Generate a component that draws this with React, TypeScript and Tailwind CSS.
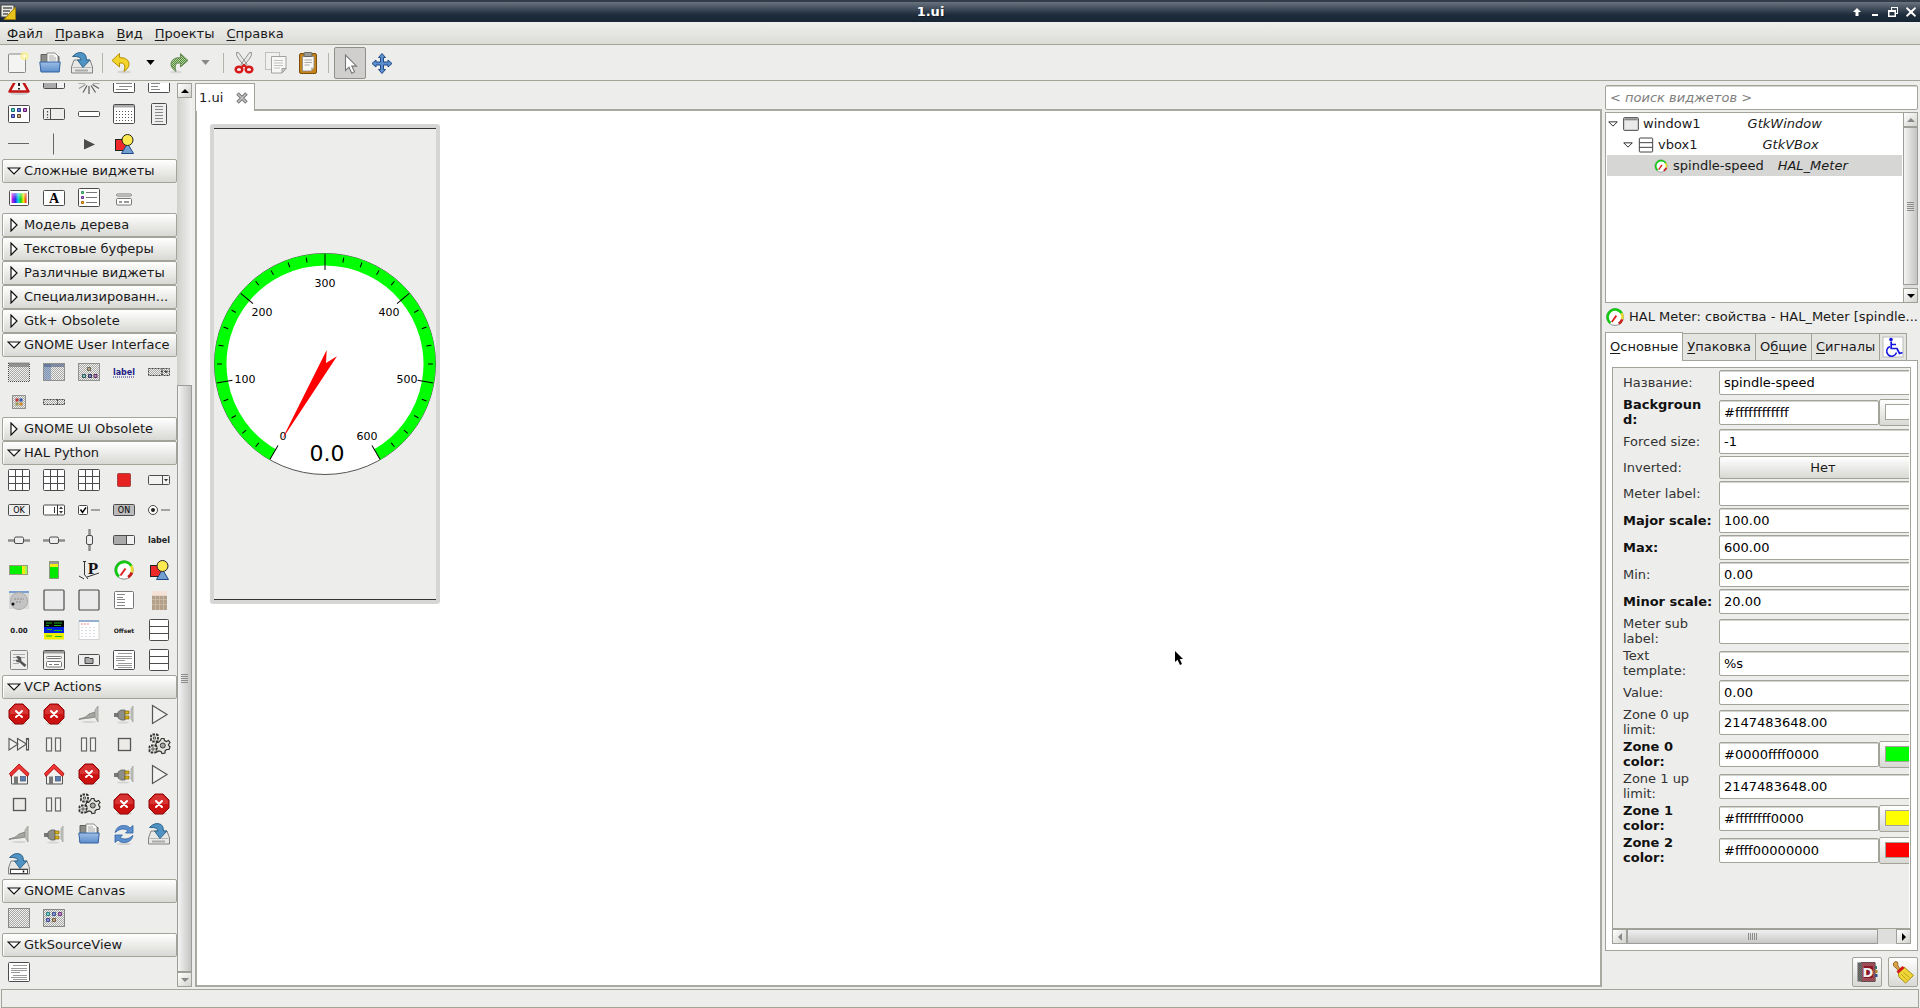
import { useState, type ReactNode } from "react";

const K = "#4c4c4c";

/* ---------- icon drawings, all on a 24 x 24 grid ---------- */

const grid3 = (
  <g fill="#fff" stroke={K} strokeWidth="1">
    <rect x="1.5" y="1.5" width="21" height="21" rx="1" />
    <path d="M8.5 1.5v21M15.5 1.5v21M1.5 8.5h21M1.5 15.5h21" />
  </g>
);

const vboxIcon = (
  <g fill="#fff" stroke={K} strokeWidth="1">
    <rect x="2.5" y="1.5" width="19" height="21" rx="1" />
    <path d="M2.5 8.5h19M2.5 15.5h19" />
  </g>
);

const shapes = (
  <g stroke="#222" strokeWidth="1">
    <rect x="3.5" y="7.500" width="11" height="11" fill="#ef2929" />
    <path d="M15.500 11.500L21.500 21.500H9.500z" fill="#729fcf" stroke="#204a87" />
    <circle cx="15.500" cy="8" r="5.500" fill="#fce94f" />
  </g>
);

const meter = (
  <g fill="none">
    <circle cx="12" cy="12" r="9.200" fill="#fff" stroke="#8a8a8a" strokeWidth="1" />
    <path d="M7 18.500A8.200 8.200 0 1 1 19.500 8.500" stroke="#12c912" strokeWidth="2.600" />
    <path d="M19 7.700A8.200 8.200 0 0 1 19.800 14.500" stroke="#e9dc2c" strokeWidth="2.600" />
    <path d="M19.800 14.500A8.200 8.200 0 0 1 16 19.200" stroke="#c81e1e" strokeWidth="2.800" />
    <path d="M8.500 17.500l5-7" stroke="#e02020" strokeWidth="2" />
  </g>
);

const stop = (
  <g>
    <ellipse cx="12" cy="21.500" rx="8" ry="1.500" fill="#cfcfcd" />
    <path d="M8 2h8l6 6v8l-6 6H8l-6-6V8z" fill="#cc1111" stroke="#8f0a0a" />
    <path d="M8.400 3h7.200L21 8.400V12H3V8.400z" fill="#e05050" opacity=".55" />
    <path d="M9 9l6 6M15 9l-6 6" stroke="#fff" strokeWidth="2" strokeLinecap="round" />
  </g>
);

const cord = (
  <g>
    <ellipse cx="12" cy="20" rx="7" ry="1" fill="#d4d4d2" />
    <path d="M2 17q7-1 10-5l6-2v5l-5 1q-4 0-11 1.500z" fill="#a4a4a0" stroke="#7a7a76" strokeWidth=".8" />
    <path d="M18 8l3-4v16l-3-5z" fill="#bdbdb9" stroke="#9a9a96" strokeWidth=".8" />
  </g>
);

const plug = (
  <g>
    <ellipse cx="11" cy="20.500" rx="6" ry="1" fill="#d4d4d2" />
    <path d="M2 11h5v4H2z" fill="#777" />
    <path d="M6 10l3-2h4v10H9l-3-2z" fill="#8d8d89" stroke="#62625e" strokeWidth=".8" />
    <path d="M13 9h4v3h-4zM13 14h4v3h-4z" fill="#d9b21a" stroke="#7c6408" strokeWidth=".7" />
    <path d="M21 4v16l-2-3V7z" fill="#c6c6c2" stroke="#a2a29e" strokeWidth=".8" />
  </g>
);

const playOutline = <path d="M5.500 3.500L20 12.500L5.500 21.500z" fill="#f2f2f0" stroke="#555" strokeWidth="1.200" />;

const stepIcon = (
  <g fill="#f2f2f0" stroke="#555" strokeWidth="1.100">
    <path d="M2 6.500l9 5.500-9 6zM10.500 6.500l9 5.500-9 6z" />
    <rect x="19.500" y="6.500" width="2" height="11.500" />
  </g>
);

const pauseIcon = (
  <g fill="#f4f4f2" stroke="#666" strokeWidth="1.200">
    <rect x="4.500" y="6" width="5" height="13" />
    <rect x="13.500" y="6" width="5" height="13" />
  </g>
);

const stopSquare = <rect x="6.500" y="6.500" width="12" height="12" fill="#ecebe8" stroke="#555" strokeWidth="1.300" />;

const gears = (
  <g fill="#e4e4df" stroke="#333">
    <path
      d="M14.500 6.500h2.500l.5 2 2 1 2-1 1.500 2-1.500 2 .5 1.500 1 1-1 2.500-2.500 0-1.500 1.500 0 2-3 .5-1-2-2-.5-2 1-1.500-2.500 1.500-1.500-.5-2-1-1 1-2.500 2 0 1.500-1.500z"
      strokeWidth="1.200"
    />
    <circle cx="15.800" cy="13.500" r="2.500" fill="#aaa" strokeWidth="1" />
    <g strokeDasharray="2.500 1">
      <rect x="4" y="2.500" width="7" height="7" rx="1.500" strokeWidth="1.800" />
      <rect x="2.500" y="13.500" width="7" height="7" rx="1.500" strokeWidth="1.800" />
    </g>
    <path d="M6.500 5h2v2h-2zM5 16h2v2H5z" fill="#fff" strokeWidth=".8" />
  </g>
);

const home = (
  <g>
    <path d="M4.500 11v11h16V11l-8-7z" fill="#f0f0ee" stroke="#555" />
    <path d="M12 2L2.500 11.500l1.500 3L12 6.500l8.500 8 1.500-3z" fill="#ef3434" stroke="#a40000" strokeWidth=".8" />
    <rect x="7" y="14.500" width="4" height="7.500" fill="#777" />
    <rect x="13.500" y="14.500" width="5" height="4.500" fill="#5b7fb4" stroke="#44546e" strokeWidth=".7" />
  </g>
);

const folder = (
  <g>
    <path d="M3 3.500h7l2 2h9V20H3z" fill="#8c8c88" stroke="#555" strokeWidth=".9" />
    <path d="M9 2h8l3 3v8H9z" fill="#f5f5f3" stroke="#777" strokeWidth=".8" />
    <path d="M11 5h5M11 7h7M11 9h7" stroke="#999" strokeWidth=".8" />
    <path d="M1.800 11h20.400l-1 10H3z" fill="url(#blueFace)" stroke="#3465a4" />
  </g>
);

const refresh = (
  <g fill="#5b8fce" stroke="#2f5f9f" strokeWidth=".8">
    <ellipse cx="12" cy="22" rx="7" ry="1" fill="#d0d0ce" stroke="none" />
    <path d="M3 10.500Q5 3 12.500 3.500Q16 3.500 18 6L21 3.500V11H13.500L16 8.500Q10 4.500 3 10.500z" />
    <path d="M21 13.500Q19 21 11.500 20.500Q8 20.500 6 18L3 20.500V13H10.500L8 15.500Q14 19.500 21 13.500z" />
  </g>
);

const save = (
  <g>
    <path d="M4 9h16l2.500 7v6h-21v-6z" fill="#e8e8e6" stroke="#777" strokeWidth=".9" />
    <path d="M2.500 16.500h19" stroke="#aaa" strokeWidth=".8" />
    <path d="M5 18.500h13v2H5z" fill="#aaa" />
    <path d="M2.500 5.500Q8-.5 14 2.500Q16.500 4 16.500 9H20L13 16.500L7.500 9H11Q11 5 2.500 5.500z" fill="#4f93c4" stroke="#285d85" strokeWidth=".9" />
  </g>
);

const saveAs = (
  <g>
    {save}
    <rect x="3.500" y="17.500" width="17" height="4" fill="#fff" stroke="#333" strokeWidth=".9" />
    <path d="M16.500 18.500v2" stroke="#000" strokeWidth="1.500" />
  </g>
);

const docLines = (
  <g>
    <rect x="1.500" y="2.500" width="21" height="19" rx="1" fill="#fff" stroke={K} />
    <path d="M6 5.500h14M4 8.500h16M4 10.500h16M4 12.500h9M6 15.500h14M4 17.500h16M6 19.500h14" stroke="#999" />
  </g>
);

const hScale = (
  <g>
    <path d="M1 12.500h22" stroke="#8c8c8c" strokeWidth="2.500" />
    <rect x="7.500" y="9" width="9" height="6.500" rx="1.500" fill="#eee" stroke={K} />
  </g>
);

const dots = (
  <g strokeWidth="1">
    <path d="M4.500 6.500h3v3h-3z" fill="#5fd0cd" stroke="#14706d" />
    <path d="M10.500 6.500h3v3h-3z" fill="#6b87d8" stroke="#223a86" />
    <path d="M16.500 6.500h3v3h-3z" fill="#c96bd8" stroke="#5c1d68" />
    <path d="M4.500 12.500h3v3h-3z" fill="#7f86dc" stroke="#252c82" />
    <path d="M10.500 12.500h3v3h-3z" fill="#c4a383" stroke="#5f4020" />
  </g>
);

const word = (t: string, size: number, fill = "#222") => (
  <text x="12" y="15" textAnchor="middle" fontSize={size} fontWeight="bold" fill={fill}>
    {t}
  </text>
);

const icons: Record<string, ReactNode> = {
  warning: (
    <g>
      <ellipse cx="12" cy="21.500" rx="9" ry="1.500" fill="#ccc" />
      <path d="M12 2.500L21.500 19.500h-19z" fill="#f6f6f4" stroke="#c41414" strokeWidth="2.500" strokeLinejoin="round" />
      <path d="M12 8v6M12 16v1.500" stroke="#222" strokeWidth="2" />
    </g>
  ),
  progress: (
    <g>
      <rect x="1.500" y="7.500" width="21" height="9" rx="1" fill="#f2f2f2" stroke={K} />
      <path d="M2 8h13v8H2z" fill="#aaa" />
      <path d="M14.500 8v8" stroke={K} />
    </g>
  ),
  spinner: (
    <g stroke="#666" strokeWidth="1.300">
      <path d="M12 14v8M14 13.500l4.500 7M15.500 12.500l6.500 4M10 13.500l-4 7" />
      <path d="M8.500 12.500l-6.500 4M8 11H1.500M16 11h6.500" stroke="#999" />
      <path d="M12 8V1M9 9L5 3M15 9l4-6" stroke="#ccc" />
    </g>
  ),
  textview: (
    <g>
      <rect x="1.500" y="2.500" width="21" height="18" rx="1" fill="#fff" stroke={K} />
      <path d="M4 5.500h16M6 8.500h12M4 11.500h16M7 14.500h13M4 17.500h12" stroke="#888" />
    </g>
  ),
  treeview: (
    <g>
      <rect x="1.500" y="2.500" width="21" height="18" rx="1" fill="#fff" stroke={K} />
      <path d="M4 5.500h8M4 8.500h6M4 11.500h9M4 14.500h7M4 17.500h9" stroke="#888" />
    </g>
  ),
  iconview: (
    <g>
      <rect x="1.500" y="3.500" width="21" height="17" rx="1" fill="#fff" stroke={K} />
      {dots}
    </g>
  ),
  handlebox: (
    <g fill="none" stroke={K}>
      <rect x="1.500" y="6.500" width="21" height="11" rx="1" />
      <path d="M8.500 6.500v11" />
      <path d="M5.500 9v7" strokeDasharray="1.500 1.500" strokeWidth="1.200" />
    </g>
  ),
  entry: <rect x="1.500" y="9.500" width="21" height="5" rx="1" fill="#fff" stroke={K} />,
  calendar: (
    <g>
      <rect x="1.500" y="2.500" width="21" height="19" rx="1" fill="#fff" stroke={K} />
      <path d="M2 3h20v2.500H2z" fill="#aaa" />
      <path d="M4 9.500h16M4 12.500h16M4 15.500h16M4 18.500h16" stroke="#555" strokeDasharray="1 2" />
    </g>
  ),
  menuDoc: (
    <g>
      <rect x="4.500" y="1.500" width="15" height="21" rx="1" fill="#eee" stroke={K} />
      <path d="M8 4.500h8M8 7.500h8M8 10.500h8M8 13.500h8M8 16.500h8M8 19.500h8" stroke="#888" />
    </g>
  ),
  hline: <path d="M1 11.500h21" stroke="#666" />,
  vline: <path d="M11.500 1.500v21" stroke="#666" />,
  arrow: <path d="M7 7l11 5.500L7 17.500z" fill="#4c4c4c" />,
  shapes,
  colorsel: (
    <g>
      <rect x="2.500" y="4.500" width="19" height="15" rx="1" fill="#fff" stroke={K} />
      <rect x="4.500" y="7" width="15" height="10" fill="url(#hue)" />
      <rect x="4.500" y="7" width="15" height="10" fill="url(#fadeWhite)" />
    </g>
  ),
  fontsel: (
    <g>
      <rect x="1.500" y="4.500" width="21" height="15" rx="1" fill="#fff" stroke={K} />
      <text x="12" y="17" textAnchor="middle" fontSize="14" fontWeight="bold" fontFamily="Liberation Serif" fill="#000">A</text>
    </g>
  ),
  listIcon: (
    <g>
      <rect x="1.500" y="2.500" width="21" height="18" rx="1" fill="#fff" stroke={K} />
      <path d="M9 6.500h11M9 11.500h11M9 16.500h11" stroke="#777" />
      <path d="M4.500 5.500h2v2h-2z" fill="#6c6" stroke="#396" />
      <path d="M4.500 10.500h2v2h-2z" fill="#a7c" stroke="#639" />
      <path d="M4.500 15.500h2v2h-2z" fill="#fa4" stroke="#b60" />
    </g>
  ),
  infobar: (
    <g fill="#fff" stroke="#777">
      <rect x="4.500" y="8" width="15" height="2" rx="1" />
      <rect x="4.500" y="12.500" width="15" height="6.500" rx="1" />
      <path d="M7 16h3M12 16h5" strokeWidth="1.500" />
    </g>
  ),
  gWindow: (
    <g>
      <rect x="1.500" y="3" width="21" height="18.500" fill="url(#dither)" stroke="#444" strokeDasharray="1 1" />
      <path d="M2 3h20v4H2z" fill="#777" opacity=".7" />
    </g>
  ),
  gDruid: (
    <g>
      <rect x="1.500" y="3.500" width="21" height="17" fill="url(#dither)" stroke="#444" strokeDasharray="1 1" />
      <path d="M2 4h7v16H2z" fill="#5b7fb4" opacity=".5" />
      <path d="M2 4h20v3H2z" fill="#4a5f86" opacity=".6" />
    </g>
  ),
  gIcons: (
    <g>
      <rect x="1.500" y="3.500" width="21" height="17" fill="url(#dither)" stroke="#444" strokeDasharray="1 1" />
      <path d="M10.500 7.500h3v3h-3z" fill="#b8a68a" stroke="#665" />
      <path d="M5.500 14.500h3v3h-3z" fill="#7cc" stroke="#355" />
      <path d="M11.500 14.500h3v3h-3z" fill="#88c" stroke="#335" />
      <path d="M17 14.500h3v3h-3z" fill="#c8c" stroke="#535" />
    </g>
  ),
  gLabel: (
    <g>
      {word("label", 8, "#1e1e86")}
      <path d="M1 17h22" stroke="#1e1e86" strokeDasharray="1 1" />
    </g>
  ),
  gCombo: (
    <g fill="url(#dither)" stroke="#444" strokeDasharray="2 1">
      <rect x="1.500" y="8.500" width="13" height="7" />
      <rect x="15.500" y="8.500" width="7" height="7" />
      <path d="M17.500 11h3l-1.500 2z" fill="#444" />
    </g>
  ),
  gColors: (
    <g>
      <rect x="5.500" y="5.500" width="13" height="13" fill="url(#dither)" stroke="#444" strokeDasharray="1 1" />
      <path d="M8.500 8.500h3v3h-3z" fill="#b33" />
      <path d="M12.500 8.500h3v3h-3z" fill="#35a" />
      <path d="M8.500 12.500h3v3h-3z" fill="#995" />
      <path d="M12.500 12.500h3v3h-3z" fill="#c82" />
    </g>
  ),
  gBar: (
    <g fill="url(#dither)" stroke="#444" strokeDasharray="2 1">
      <rect x="1.500" y="9.500" width="21" height="5" />
      <path d="M15.500 9.500v5" />
    </g>
  ),
  grid3,
  led: <rect x="5.500" y="5.500" width="13" height="13" rx="1" fill="#e62222" stroke="#a04848" />,
  combo: (
    <g fill="#f3f3f1" stroke={K}>
      <rect x="1.500" y="7.500" width="21" height="9" rx="1" />
      <path d="M15.500 7.500v9" />
      <path d="M17 11h4l-2 2.500z" fill="#333" stroke="none" />
    </g>
  ),
  ok: (
    <g>
      <rect x="1.500" y="6.500" width="21" height="11" rx="1" fill="#eee" stroke={K} />
      <text x="12" y="15" textAnchor="middle" fontSize="8" fill="#000">OK</text>
    </g>
  ),
  spin: (
    <g>
      <rect x="1.500" y="7" width="21" height="10" rx="1" fill="#fff" stroke={K} />
      <path d="M15.500 7v10M12.500 9v6" stroke="#333" />
      <path d="M17 11l2-2.500 2 2.500zM17 13l2 2.500 2-2.500z" fill="#333" />
    </g>
  ),
  check: (
    <g>
      <rect x="1.500" y="7.500" width="9" height="9" rx="1" fill="#fff" stroke={K} />
      <path d="M3.500 11.500l2 3 3.500-5" stroke="#000" strokeWidth="1.500" fill="none" />
      <path d="M14 12h9" stroke="#888" strokeWidth="1.500" />
    </g>
  ),
  on: (
    <g>
      <rect x="1.500" y="6.500" width="21" height="11" rx="1" fill="#bbb" stroke={K} />
      <text x="12" y="15" textAnchor="middle" fontSize="8" fill="#000">ON</text>
    </g>
  ),
  radio: (
    <g>
      <circle cx="6" cy="12" r="4.500" fill="#fff" stroke={K} />
      <circle cx="6" cy="12" r="2" fill="#222" />
      <path d="M14 12h9" stroke="#888" strokeWidth="1.500" />
    </g>
  ),
  hScale,
  vScale: (
    <g>
      <path d="M12.500 1v22" stroke="#8c8c8c" strokeWidth="2.500" />
      <rect x="9.500" y="7.500" width="6" height="9" rx="1.500" fill="#eee" stroke={K} />
    </g>
  ),
  label: word("label", 8),
  hBar: (
    <g>
      <rect x="2.500" y="7.500" width="18" height="9" fill="#00f000" stroke="#9a9a7a" />
      <path d="M15 8h3v8h-3z" fill="#f4ec10" />
      <path d="M18 8h2v8h-2z" fill="#9f5" />
    </g>
  ),
  vBar: (
    <g>
      <rect x="7.500" y="3.500" width="9" height="17" fill="#00e800" stroke="#8a9a7a" />
      <path d="M8 4h8v2H8z" fill="#999" />
      <path d="M8 6h8v3H8z" fill="#f4ec10" />
    </g>
  ),
  plot: (
    <g>
      <text x="16" y="16" textAnchor="middle" fontSize="17" fontWeight="bold" fontFamily="Liberation Serif" fill="#111">P</text>
      <path d="M7.500 3v13M6 3.500h3M2 18l5 3M10 19l12-4M7 16l4 5" stroke="#333" fill="none" />
    </g>
  ),
  meter,
  disc: (
    <g>
      <path d="M2 3h20v2H2z" fill="#7aa0d0" />
      <rect x="2" y="5" width="20" height="16" fill="#d9d9d7" />
      <circle cx="12" cy="13" r="8.500" fill="#c4c4c4" stroke="#aaa" />
      <path d="M7 11h10M9 14h6" stroke="#888" strokeDasharray="2 1" />
      <circle cx="6" cy="16" r="1.500" fill="#111" />
    </g>
  ),
  box: <rect x="2" y="2" width="20" height="20" rx="1" fill="#ebebeb" stroke={K} strokeWidth="1.200" />,
  sideList: (
    <g>
      <rect x="2.500" y="3.500" width="19" height="17" rx="1" fill="#fff" stroke="#777" />
      <path d="M5 6.500h8M5 9.500h6M5 11.500h8M5 14.500h8M5 17.500h8" stroke="#888" />
    </g>
  ),
  keypad: (
    <g>
      <rect x="5" y="3" width="15" height="19" fill="#e5d8c8" />
      <path d="M5 3h15v4H5z" fill="#f4e2d8" />
      <path d="M5 8h15v14H5z" fill="#b4a08a" />
      <path d="M8.500 8v14M12.500 8v14M16.500 8v14M5 11.500h15M5 16.500h15" stroke="#cfc0ac" strokeWidth=".7" />
    </g>
  ),
  num: word("0.00", 7),
  dro: (
    <g>
      <rect x="2" y="2.500" width="20" height="6.500" fill="#000" />
      <rect x="2" y="9" width="20" height="6" fill="#0022dd" />
      <rect x="2" y="15" width="20" height="6.500" fill="#eef000" />
      <path d="M4 5h6M12 5h8M4 7.500h3M12 7.500h7M5 11.500h5M12 12.500h8M4 18h6M13 18.500h7" stroke="#1db31d" strokeWidth="1" />
    </g>
  ),
  tableIcon: (
    <g>
      <rect x="2" y="3" width="20" height="18.500" fill="#fff" stroke="#d4d4d4" />
      <path d="M2 3h20" stroke="#7a9cc8" strokeWidth="1.500" />
      <path d="M4 6h9" stroke="#e88" strokeDasharray="2 1" />
      <path d="M4 9.500h16M4 12.500h16M4 15.500h16M4 18.500h16" stroke="#dcdce4" strokeDasharray="2 2" />
    </g>
  ),
  offset: word("Offset", 6),
  vboxIcon,
  tool: (
    <g>
      <rect x="3.500" y="2.500" width="17" height="19" rx="1" fill="#eee" stroke="#888" />
      <path d="M6 6.500h12M6 9.500h12M6 12.500h6M6 15.500h6" stroke="#aaa" />
      <path d="M9 8.500q3-1.500 5 1l.5 3.500 5 4-2 2-5-4.500-3-.5q-1-2 0-2.500l2 .5z" fill="#555" />
    </g>
  ),
  dialog: (
    <g>
      <rect x="1.500" y="2.500" width="21" height="19" rx="1" fill="#f2f2f0" stroke={K} />
      <path d="M2 3h20v2.500H2z" fill="#999" />
      <g fill="#fff" stroke="#777">
        <rect x="4.500" y="8.500" width="15" height="2" rx="1" />
        <rect x="4.500" y="13.500" width="15" height="5.500" rx="1" />
        <path d="M7 16.500h3M12 16.500h5" />
      </g>
    </g>
  ),
  folderBtn: (
    <g>
      <rect x="1.500" y="6.500" width="21" height="11" rx="1" fill="#eee" stroke={K} />
      <path d="M8 9.500h4l1 1h3v5H8z" fill="#aaa" stroke="#333" strokeWidth=".9" />
    </g>
  ),
  docLines,
  stop,
  cord,
  plug,
  playOutline,
  stepIcon,
  pauseIcon,
  stopSquare,
  gears,
  home,
  folder,
  refresh,
  save,
  saveAs,
  canvas: <rect x="1.500" y="2.500" width="21" height="19" fill="url(#dither)" stroke="#333" strokeDasharray="1 1" />,
  canvasDots: (
    <g>
      <rect x="1.500" y="3.500" width="21" height="17" fill="url(#dither)" stroke="#333" strokeDasharray="1 1" />
      <g opacity=".8">{dots}</g>
    </g>
  ),
  newDoc: (
    <g>
      <rect x="2.500" y="3" width="17" height="18.500" rx="1" fill="#f4f4f2" stroke="#888" />
      <circle cx="18.500" cy="5" r="4" fill="#fcf28a" opacity=".8" />
      <circle cx="18.500" cy="5" r="1.500" fill="#fff" />
    </g>
  ),
  undo: (
    <g>
      <ellipse cx="14" cy="21" rx="7" ry="1.500" fill="#d3d3d1" />
      <path d="M9.500 2.500L2 9.500l7.500 6.500v-4Q17 11 14 20.500Q22 15 17.500 9Q15 6.500 9.500 6.500z" fill="#f3d42a" stroke="#b48f04" />
    </g>
  ),
  redo: (
    <g>
      <ellipse cx="9" cy="21" rx="6" ry="1.500" fill="#d8d8d6" />
      <path
        d="M13.500 2.500L21 9.500l-7.500 6.500v-4Q6 11 9 20.500Q1 15 5.500 9Q8 6.500 13.500 6.500z"
        fill="url(#greenDither)"
        stroke="#6c8a5c"
      />
    </g>
  ),
  cut: (
    <g>
      <path d="M4.500 1.500Q4 4 6 7l7 9 2-2.500L6.500 1.500zM19.500 1.500Q20 4 18 7l-7 9-2-2.500L17.500 1.500z" fill="#e9e9e7" stroke="#888" strokeWidth=".9" />
      <ellipse cx="7" cy="18.500" rx="3.300" ry="2.800" fill="none" stroke="#d81818" strokeWidth="2.500" />
      <ellipse cx="17" cy="18.500" rx="3.300" ry="2.800" fill="none" stroke="#d81818" strokeWidth="2.500" />
      <path d="M10 16l2-2 2 2" stroke="#d81818" strokeWidth="2" fill="none" />
    </g>
  ),
  copy: (
    <g stroke="#999" strokeWidth=".9">
      <rect x="1.500" y="1.500" width="14" height="17" fill="#f0f0ee" stroke="#bbb" />
      <path d="M7.500 5.500h14.500v12l-4 4.500H7.500z" fill="#f7f7f5" />
      <path d="M10 9.500h9M10 12h9M10 14.500h9M10 17h6" stroke="#bbb" />
      <path d="M22 17.500h-4v4.500z" fill="#ccc" />
    </g>
  ),
  paste: (
    <g>
      <rect x="3.500" y="2.500" width="17" height="20" rx="1.500" fill="#c4831c" stroke="#7e4f08" />
      <path d="M6.500 5.500h11.500v11l-3 3.500H6.500z" fill="#f7f7f5" stroke="#888" strokeWidth=".8" />
      <rect x="8" y="1.500" width="8" height="4" rx="1" fill="#9a9a96" stroke="#555" strokeWidth=".8" />
      <path d="M8.500 9h7.500M8.500 11.500h7.500M8.500 14h5" stroke="#aaa" />
      <path d="M18 16.500h-3v3.500z" fill="#bbb" />
    </g>
  ),
  pointer: <path d="M7.500 4v15.500l3.500-3.300 2.800 6 2.700-1.400-2.700-5.700h4.700z" fill="#fff" stroke="#777" strokeWidth="1.100" />,
  move: (
    <path
      d="M12 2.500l3.500 4h-2V11H18V9l4 3.500-4 3.500v-2h-4.500v4.500h2l-3.500 4-3.500-4h2V14H6v2l-4-3.500L6 9v2h4.500V6.500h-2z"
      fill="#5b8fce"
      stroke="#1f4a87"
    />
  ),
  handicap: (
    <g>
      <rect x="2" y="2" width="20" height="20" fill="#fff" stroke="#bbb" />
      <circle cx="10" cy="4.500" r="1.800" fill="#1414e0" />
      <path d="M10.200 6.500v7h5.800l2.500 5 3-1M10.500 9.500h4.500" stroke="#1414e0" strokeWidth="1.700" fill="none" />
      <path d="M9 11.500a5 5 0 1 0 6.500 6" stroke="#1414e0" strokeWidth="1.500" fill="none" />
    </g>
  ),
  docs: (
    <g>
      <path d="M6 2.500h14v19H6z" fill="#8a1626" stroke="#3b1a20" />
      <path d="M2.500 2.500H7v19H2.500z" fill="#3a3a3a" />
      <path d="M20 6h2v3h-2z" fill="#3a7a6a" />
      <path d="M20 10h2.500v3H20z" fill="#a8862a" />
      <path d="M20 14h2.500v3H20z" fill="#34508a" />
      <rect x="2" y="2" width="18" height="20" fill="url(#dither)" opacity=".3" />
      <path d="M9 6h8l1 1v10l-1 1H9z" fill="#8a1626" />
      <text x="13" y="16.500" textAnchor="middle" fontSize="13" fontWeight="bold" fill="#f0f0f0">D</text>
    </g>
  ),
  broom: (
    <g>
      <path d="M2.500 3q1.500-2.500 4-1l.5 4 3 4-2 1.500L5 8 2.500 6z" fill="#d8a14a" stroke="#8a5a14" strokeWidth=".8" />
      <path d="M7 12l6-5 4 3.500 5.500 5-8 7.500L8 17z" fill="#efd637" stroke="#a08408" strokeWidth=".9" />
      <path d="M10 14l6 6M12.500 12.500l6 5" stroke="#c4a41a" />
      <path d="M6.500 12.500l6-5.500" stroke="#d01818" strokeWidth="3" />
    </g>
  ),
  gladeWin: (
    <g>
      <rect x="1" y="2.500" width="22" height="19" rx="1" fill="#eaeaea" stroke="#444" strokeWidth="1.500" />
      <path d="M2 5h20" stroke="#888" strokeWidth="3" />
    </g>
  ),
  vboxSmall: (
    <g fill="#fff" stroke="#444" strokeWidth="1.500">
      <rect x="2" y="1.500" width="20" height="21" rx="1" />
      <path d="M2 8.500h20M2 15.500h20" />
    </g>
  ),
};

function Icon({ name, className = "size-6" }: { name: string; className?: string }) {
  return (
    <svg viewBox="0 0 24 24" className={`${className} shrink-0`} aria-hidden="true">
      {icons[name]}
    </svg>
  );
}

function SharedDefs() {
  return (
    <svg className="absolute size-0" aria-hidden="true">
      <defs>
        <pattern id="dither" width="2" height="2" patternUnits="userSpaceOnUse">
          <rect width="2" height="2" fill="#f0f0ee" />
          <rect width="1" height="1" fill="#a8a8a6" />
          <rect x="1" y="1" width="1" height="1" fill="#a8a8a6" />
        </pattern>
        <pattern id="greenDither" width="2" height="2" patternUnits="userSpaceOnUse">
          <rect width="2" height="2" fill="#b9d3a8" />
          <rect width="1" height="1" fill="#4e8a34" />
          <rect x="1" y="1" width="1" height="1" fill="#4e8a34" />
        </pattern>
        <linearGradient id="blueFace" x1="0" y1="0" x2="0" y2="1">
          <stop offset="0" stopColor="#9dbfe6" />
          <stop offset="1" stopColor="#5c8dcb" />
        </linearGradient>
        <linearGradient id="hue">
          <stop offset="0" stopColor="#e020e0" />
          <stop offset=".25" stopColor="#2828f0" />
          <stop offset=".45" stopColor="#10d8e8" />
          <stop offset=".62" stopColor="#18d818" />
          <stop offset=".8" stopColor="#f0e810" />
          <stop offset="1" stopColor="#f01818" />
        </linearGradient>
        <linearGradient id="fadeWhite" x1="0" y1="0" x2="0" y2="1">
          <stop offset="0" stopColor="#fff" stopOpacity=".5" />
          <stop offset=".6" stopColor="#fff" stopOpacity="0" />
        </linearGradient>
      </defs>
    </svg>
  );
}

/* ---------- palette ---------- */

type Group = { title?: string; open: boolean; items: string[] };

const palette: Group[] = [
  {
    open: true,
    items: [
      "warning", "progress", "spinner", "textview", "treeview",
      "iconview", "handlebox", "entry", "calendar", "menuDoc",
      "hline", "vline", "arrow", "shapes",
    ],
  },
  { title: "Сложные виджеты", open: true, items: ["colorsel", "fontsel", "listIcon", "infobar"] },
  { title: "Модель дерева", open: false, items: [] },
  { title: "Текстовые буферы", open: false, items: [] },
  { title: "Различные виджеты", open: false, items: [] },
  { title: "Специализированн...", open: false, items: [] },
  { title: "Gtk+ Obsolete", open: false, items: [] },
  { title: "GNOME User Interface", open: true, items: ["gWindow", "gDruid", "gIcons", "gLabel", "gCombo", "gColors", "gBar"] },
  { title: "GNOME UI Obsolete", open: false, items: [] },
  {
    title: "HAL Python",
    open: true,
    items: [
      "grid3", "grid3", "grid3", "led", "combo",
      "ok", "spin", "check", "on", "radio",
      "hScale", "hScale", "vScale", "progress", "label",
      "hBar", "vBar", "plot", "meter", "shapes",
      "disc", "box", "box", "sideList", "keypad",
      "num", "dro", "tableIcon", "offset", "vboxIcon",
      "tool", "dialog", "folderBtn", "docLines", "vboxIcon",
    ],
  },
  {
    title: "VCP Actions",
    open: true,
    items: [
      "stop", "stop", "cord", "plug", "playOutline",
      "stepIcon", "pauseIcon", "pauseIcon", "stopSquare", "gears",
      "home", "home", "stop", "plug", "playOutline",
      "stopSquare", "pauseIcon", "gears", "stop", "stop",
      "cord", "plug", "folder", "refresh", "save",
      "saveAs",
    ],
  },
  { title: "GNOME Canvas", open: true, items: ["canvas", "canvasDots"] },
  { title: "GtkSourceView", open: true, items: ["docLines"] },
];

function Expander({ open, className }: { open: boolean; className: string }) {
  return (
    <svg viewBox="0 0 14 14" className={`${className} shrink-0`} aria-hidden="true">
      <path d={open ? "M1 4h12L7 10z" : "M4 1v12L10 7z"} fill="#fff" stroke="#111" strokeWidth="1.200" />
    </svg>
  );
}

function PaletteGroup({ title, open, items }: Group) {
  return (
    <section>
      {title && (
        <button
          type="button"
          aria-expanded={open}
          className="flex h-6 w-full items-center gap-[3px] rounded-xs border border-[#a3a39a] bg-linear-to-b from-white to-[#d8d9d4] px-1 text-left whitespace-nowrap shadow-[inset_1px_0_0_#fff]"
        >
          <Expander open={open} className="size-[14px]" />
          <span>{title}</span>
        </button>
      )}
      {open && (
        <div className="grid grid-cols-5">
          {items.map((name, i) => (
            <button key={i} type="button" aria-label={name} className="flex h-[30px] items-center pl-[5px]">
              <Icon name={name} />
            </button>
          ))}
        </div>
      )}
    </section>
  );
}

/* ---------- scroll bars ---------- */

function ScrollArrow({ dir, off = false }: { dir: "up" | "down" | "left" | "right"; off?: boolean }) {
  const d = { up: "M2 8h8L6 4z", down: "M2 4h8L6 8z", left: "M8 2v8L4 6z", right: "M4 2v8l4-4z" }[dir];
  return (
    <button
      type="button"
      aria-label={dir}
      className="flex size-[15px] shrink-0 items-center justify-center border border-[#a0a098] bg-linear-to-br from-white to-[#d2d2ce]"
    >
      <svg viewBox="0 0 12 12" className="size-3 shrink-0">
        <path d={d} fill={off ? "#888" : "#000"} />
      </svg>
    </button>
  );
}

const vThumb =
  "flex flex-col items-center justify-center gap-px border border-[#9c9c98] bg-linear-to-r from-[#f4f4f4] to-[#c4c4c2]";

function Grip() {
  return (
    <>
      {[0, 1, 2, 3, 4].map((i) => (
        <span key={i} className="h-px w-[7px] bg-[#8c8c8a]" />
      ))}
    </>
  );
}

/* ---------- gauge ---------- */

const ticks = Array.from({ length: 31 }, (_, i) => ({ angle: -150 + i * 10, major: i % 5 === 0 }));

const gaugeLabels: [string, number, number][] = [
  ["0", 69, 187],
  ["100", 31, 130],
  ["200", 48, 63],
  ["300", 111, 34],
  ["400", 175, 63],
  ["500", 193, 130],
  ["600", 153, 187],
];

function Gauge() {
  return (
    <svg viewBox="0 0 222 222" className="w-full" role="img" aria-label="spindle-speed">
      <circle cx="111" cy="111" r="110.500" fill="#fff" stroke="#555" strokeWidth="1" />
      <path d="M58.750 201.500A104.500 104.500 0 1 1 163.250 201.500" fill="none" stroke="#00ff00" strokeWidth="12" />
      {ticks.map(({ angle, major }) => (
        <path
          key={angle}
          d={major ? "M111 1V17" : "M111 3V8"}
          transform={`rotate(${angle} 111 111)`}
          stroke="#000"
          strokeWidth="1"
        />
      ))}
      <g fontSize="11" fill="#000" textAnchor="middle">
        {gaugeLabels.map(([t, x, y]) => (
          <text key={t} x={x} y={y}>{t}</text>
        ))}
        <text x="113" y="208" fontSize="22">0.0</text>
      </g>
      <path d="M112.700 97L112 110L123 103.300L67.700 187z" fill="#f00" />
    </svg>
  );
}

/* ---------- properties ---------- */

type Prop = { label: string; value?: string; bold?: boolean; kind?: "toggle"; color?: string };

const props: Prop[] = [
  { label: "Название:", value: "spindle-speed" },
  { label: "Backgroun\u200bd:", value: "#ffffffffffff", bold: true, color: "#ffffff" },
  { label: "Forced size:", value: "-1" },
  { label: "Inverted:", value: "Нет", kind: "toggle" },
  { label: "Meter label:", value: "" },
  { label: "Major scale:", value: "100.00", bold: true },
  { label: "Max:", value: "600.00", bold: true },
  { label: "Min:", value: "0.00" },
  { label: "Minor scale:", value: "20.00", bold: true },
  { label: "Meter sub label:", value: "" },
  { label: "Text template:", value: "%s" },
  { label: "Value:", value: "0.00" },
  { label: "Zone 0 up limit:", value: "2147483648.00" },
  { label: "Zone 0 color:", value: "#0000ffff0000", bold: true, color: "#00ff00" },
  { label: "Zone 1 up limit:", value: "2147483648.00" },
  { label: "Zone 1 color:", value: "#ffffffff0000", bold: true, color: "#ffff00" },
  { label: "Zone 2 color:", value: "#ffff00000000", bold: true, color: "#ff0000" },
];

const field =
  "h-[25px] min-w-0 flex-1 rounded-xs border border-[#a3a39a] bg-white px-1 text-black shadow-[inset_0_1px_0_#d4d4ce] outline-none";
const face = "border border-[#a3a39a] bg-linear-to-b from-white to-[#d8d9d4]";

function PropRow({ p, id }: { p: Prop; id: string }) {
  return (
    <div className="flex items-center gap-1">
      <label
        htmlFor={id}
        className={`w-[92px] shrink-0 leading-[15px] wrap-break-word ${p.bold ? "font-bold text-[#111]" : "text-[#333]"}`}
      >
        {p.label}
      </label>
      {p.kind === "toggle" ? (
        <button id={id} type="button" className={`h-[23px] flex-1 rounded-xs ${face}`}>
          {p.value}
        </button>
      ) : (
        <input id={id} type="text" defaultValue={p.value} className={field} />
      )}
      {p.color && (
        <button
          type="button"
          aria-label={p.label}
          className={`-ml-1 flex h-[27px] w-12 shrink-0 items-center justify-center rounded-xs ${face}`}
        >
          <span className="h-4 w-9 border border-[#a3a39a]" style={{ backgroundColor: p.color }} />
        </button>
      )}
    </div>
  );
}

const tabs = [
  ["", "О", "сновные"],
  ["", "У", "паковка"],
  ["О", "б", "щие"],
  ["", "С", "игналы"],
];

const tree = [
  { name: "window1", type: "GtkWindow", icon: "gladeWin", pad: "pl-px", typePad: "ml-[47px]", leaf: false },
  { name: "vbox1", type: "GtkVBox", icon: "vboxSmall", pad: "pl-4", typePad: "ml-[65px]", leaf: false },
  { name: "spindle-speed", type: "HAL_Meter", icon: "meter", pad: "pl-[46px]", typePad: "ml-[14px]", leaf: true },
];

const menus = ["Файл", "Правка", "Вид", "Проекты", "Справка"];

function ToolButton({ name, pressed = false }: { name: string; pressed?: boolean }) {
  return (
    <button
      type="button"
      aria-label={name}
      className={`flex size-8 items-center justify-center ${pressed ? "rounded-xs border border-[#90908a] bg-[#d0cfce]" : ""}`}
    >
      <Icon name={name} />
    </button>
  );
}

function DropArrow({ off = false }: { off?: boolean }) {
  return (
    <button type="button" aria-label="history" className="flex w-6 justify-center">
      <svg viewBox="0 0 10 6" className="h-[5px] w-[9px]">
        <path d="M0 0h10L5 6z" fill={off ? "#888" : "#000"} />
      </svg>
    </button>
  );
}

const Sep = () => <span className="h-5 w-px bg-[#b4b4ac]" />;

export default function App() {
  const [tab, setTab] = useState(0);

  return (
    <div className="flex h-screen cursor-default flex-col overflow-hidden bg-[#ededeb] font-['DejaVu_Sans',sans-serif] text-[13px] leading-4 text-[#1a1a1a]">
      <SharedDefs />

      <header className="flex h-[22px] shrink-0 items-center border-t-2 border-[#323d49] bg-linear-to-b from-[#6a7480] via-[#1e2b3b] via-65% to-[#182636] text-white">
        <svg viewBox="0 0 16 16" className="size-4" aria-hidden="true">
          <rect x="1" y="1" width="13" height="12" fill="#e8e8e4" stroke="#444" />
          <path d="M3 4h9M3 7h7M3 10h5" stroke="#555" strokeWidth="1.300" />
          <path d="M15.500 3v12.500H4z" fill="#e6c41c" stroke="#9a7c06" />
        </svg>
        <h1 className="flex-1 pr-1 text-center font-bold [text-shadow:1px_1px_0_#0006]">1.ui</h1>
        <div className="flex items-center gap-[2px] pr-px">
          {[
            "M8 4L4 8h2.500v4h3V8H12z",
            "M5 10h6v2H5z",
            "M6 3h7v7h-2v3H3V6h3zm1 1v2h4v3h1V4zM4.500 8v3.500h5V8z",
            "M4 3l4 3.500L12 3l1 1.500L9.500 8l3.500 3.500-1 1.500-4-3.500L4 13l-1-1.500L6.500 8 3 4.500z",
          ].map((d, i) => (
            <button key={i} type="button" aria-label={["Свернуть в заголовок", "Свернуть", "Восстановить", "Закрыть"][i]}>
              <svg viewBox="0 0 16 16" className="size-4">
                <path d={d} fill="#fff" fillRule="evenodd" />
              </svg>
            </button>
          ))}
        </div>
      </header>

      <nav className="flex h-[23px] shrink-0 items-center gap-3 border-b border-[#a3a39a] bg-linear-to-b from-[#f0f0ee] to-[#dbdcd6] px-[7px] pt-px">
        {menus.map((m) => (
          <button key={m} type="button">
            <span className="underline underline-offset-2">{m[0]}</span>
            {m.slice(1)}
          </button>
        ))}
      </nav>

      <div className="flex h-9 shrink-0 items-center border-b border-[#a3a39a] px-[2px]">
        <ToolButton name="newDoc" />
        <ToolButton name="folder" />
        <ToolButton name="save" />
        <span className="w-1" />
        <Sep />
        <span className="w-[3px]" />
        <ToolButton name="undo" />
        <DropArrow />
        <span className="w-px" />
        <ToolButton name="redo" />
        <span className="-ml-[2px]" />
        <DropArrow off />
        <span className="w-[6px]" />
        <Sep />
        <span className="w-1" />
        <ToolButton name="cut" />
        <ToolButton name="copy" />
        <ToolButton name="paste" />
        <span className="w-1" />
        <Sep />
        <span className="w-[5px]" />
        <ToolButton name="pointer" pressed />
        <ToolButton name="move" />
      </div>

      <main className="flex min-h-0 flex-1 pt-[2px]">
        <aside className="flex w-[195px] shrink-0">
          <div className="flex min-w-0 flex-1 flex-col justify-end overflow-hidden pl-[2px]">
            {palette.map((g, i) => (
              <PaletteGroup key={i} {...g} />
            ))}
          </div>
          <div className="mr-[3px] flex w-[15px] flex-col bg-linear-to-r from-[#cfcfcc] to-[#f2f2f0]">
            <ScrollArrow dir="up" />
            <div className="flex-[288]" />
            <div className={`flex-[586] ${vThumb}`}>
              <Grip />
            </div>
            <ScrollArrow dir="down" off />
          </div>
        </aside>

        <section className="flex min-w-0 flex-1 flex-col">
          <div className="-mb-[2px] flex h-7">
            <div className="z-10 flex w-[60px] items-center justify-between border border-b-0 border-[#a3a39a] bg-white pr-1 pl-[3px]">
              <button type="button">1.ui</button>
              <button type="button" aria-label="Закрыть вкладку" className="pr-[2px]">
                <svg viewBox="0 0 12 12" className="size-3">
                  <path d="M1.500 1.500l9 9M10.500 1.500l-9 9" stroke="#777" strokeWidth="3.500" />
                  <path d="M2 2l8 8M10 2l-8 8" stroke="#c4c4c2" strokeWidth="1.500" />
                </svg>
              </button>
            </div>
          </div>
          <div className="relative min-h-0 flex-1 border-2 border-[#a9a9a1] bg-white p-[13px]">
            <div className="flex h-[480px] w-[230px] rounded-[3px] border-4 border-[#d6d6d4] bg-[#ededeb]">
              <div className="flex flex-1 items-center border-y border-[#333]">
                <Gauge />
              </div>
            </div>
            <svg viewBox="0 0 8 14" className="absolute top-[540px] left-[978px] h-[14px] w-2" aria-hidden="true">
              <path d="M0 0v11l2.500-2.300L5 14l2-1-2.300-5H8z" fill="#000" />
            </svg>
          </div>
        </section>

        <aside className="flex w-[318px] shrink-0 flex-col pt-[2px] pr-[2px] pl-[3px]">
          <input
            type="text"
            aria-label="поиск виджетов"
            placeholder="< поиск виджетов >"
            className="h-[25px] w-full shrink-0 rounded-xs border border-[#a3a39a] bg-white px-1 italic shadow-[inset_0_1px_0_#d4d4ce] outline-none placeholder:text-[#808080]"
          />
          <div className="mt-[2px] flex h-[191px] shrink-0 border border-[#a3a39a] bg-white">
            <ul role="tree" aria-label="Виджеты" className="min-w-0 flex-1 px-px">
              {tree.map((t) => (
                <li key={t.name} role="treeitem" className={`flex h-[21px] items-center ${t.pad} ${t.leaf ? "bg-[#d6d6d4]" : ""}`}>
                  {!t.leaf && <Expander open className="mr-[5px] size-[10px]" />}
                  <Icon name={t.icon} className="size-4" />
                  <span className="pl-1">{t.name}</span>
                  <span className={`italic ${t.typePad}`}>{t.type}</span>
                </li>
              ))}
            </ul>
            <div className="-my-px -mr-px flex w-[15px] flex-col bg-[#dededc]">
              <ScrollArrow dir="up" off />
              <div className={`flex-[158] ${vThumb}`}>
                <Grip />
              </div>
              <div className="flex-[3]" />
              <ScrollArrow dir="down" />
            </div>
          </div>

          <div className="flex h-[29px] shrink-0 items-center gap-[3px] pb-px">
            <Icon name="meter" className="-ml-px size-[22px]" />
            <h2 className="whitespace-nowrap">HAL Meter: свойства - HAL_Meter [spindle...</h2>
          </div>

          <div role="tablist" className="-mb-px flex h-[29px] shrink-0 items-end">
            {tabs.map(([a, u, b], i) => (
              <button
                key={i}
                role="tab"
                type="button"
                aria-selected={tab === i}
                onClick={() => setTab(i)}
                className={`-mr-px border border-[#a3a39a] px-1 ${
                  tab === i ? "z-10 h-full border-b-0 bg-white" : "h-7 bg-[#e4e4e1]"
                }`}
              >
                {a}
                <span className="underline underline-offset-2">{u}</span>
                {b}
              </button>
            ))}
            <button
              role="tab"
              type="button"
              aria-label="Доступность"
              aria-selected={tab === 4}
              onClick={() => setTab(4)}
              className="h-7 border border-[#a3a39a] bg-[#e4e4e1] px-px"
            >
              <Icon name="handicap" />
            </button>
          </div>

          <div className="flex min-h-0 flex-1 flex-col border border-[#a3a39a] bg-white p-[6px]">
            <form className="min-h-0 flex-1 overflow-hidden border border-[#a3a39a] pr-px">
              <div className="h-full overflow-hidden bg-[#ededeb] pt-[2px] pl-[10px]">
                <div className="flex w-[304px] flex-col gap-[2px]">
                  {props.map((p, i) => (
                    <PropRow key={i} p={p} id={`prop-${i}`} />
                  ))}
                </div>
              </div>
            </form>
            <div className="flex h-[15px] shrink-0 bg-[#dededc]">
              <ScrollArrow dir="left" off />
              <div className="flex flex-[251] items-center justify-center gap-px border border-[#9c9c98] bg-linear-to-b from-[#f0f0f0] to-[#c8c8c6]">
                {[0, 1, 2, 3, 4].map((i) => (
                  <span key={i} className="h-[7px] w-px bg-[#8c8c8a]" />
                ))}
              </div>
              <div className="flex-[18]" />
              <ScrollArrow dir="right" />
            </div>
          </div>

          <div className="flex shrink-0 justify-end gap-[6px] pt-[6px]">
            {["docs", "broom"].map((n) => (
              <button key={n} type="button" aria-label={n} className={`flex size-[30px] items-center justify-center rounded-xs ${face}`}>
                <Icon name={n} />
              </button>
            ))}
          </div>
        </aside>
      </main>

      <footer className="h-[21px] shrink-0 px-px pt-[2px]">
        <div className="h-full border border-[#a3a39a]" />
      </footer>
    </div>
  );
}
